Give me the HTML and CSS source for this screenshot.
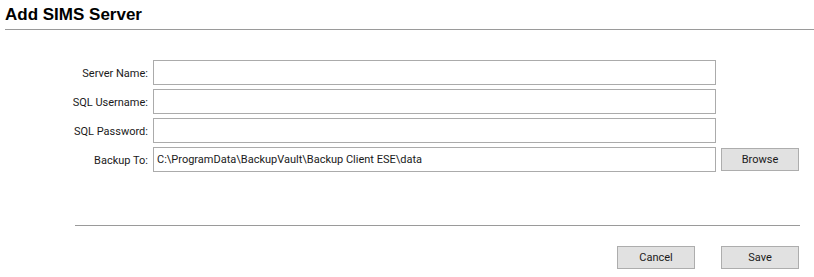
FILE: index.html
```html
<!DOCTYPE html>
<html lang="en">
<head>
    <meta charset="UTF-8">
    <title>Add SIMS Server</title>
    <link rel="stylesheet" href="styles.css">
</head>
<body>
    <div class="dialog-header">
        <h1>Add SIMS Server</h1>
    </div>
    <form id="server-form" class="server-form">
        <label for="server-name">Server Name:</label>
        <input type="text" id="server-name" name="server-name">
        <span></span>

        <label for="sql-username">SQL Username:</label>
        <input type="text" id="sql-username" name="sql-username">
        <span></span>

        <label for="sql-password">SQL Password:</label>
        <input type="password" id="sql-password" name="sql-password">
        <span></span>

        <label for="backup-to">Backup To:</label>
        <input type="text" id="backup-to" name="backup-to" value="C:\ProgramData\BackupVault\Backup Client ESE\data">
        <button type="button" class="btn browse">Browse</button>
    </form>
    <div class="dialog-footer">
        <button type="button" class="btn">Cancel</button>
        <button type="submit" form="server-form" class="btn">Save</button>
    </div>
</body>
</html>
```

FILE: styles.css
```css
body {
    margin: 0;
    background: #fff;
    font-family: Roboto, "Liberation Sans", sans-serif;
    font-size: 11px;
    color: #1a1a1a;
}
.dialog-header {
    margin-left: 5px;
    padding: 5px 0 4px 0;
    border-bottom: 1px solid #9a9a9a;
}
.dialog-header h1 {
    margin: 0;
    font-family: "Liberation Sans", Arial, sans-serif;
    font-size: 17px;
    line-height: 20px;
    font-weight: bold;
    color: #000;
}
.server-form {
    display: grid;
    grid-template-columns: 88px 563px 78px;
    column-gap: 5px;
    row-gap: 4px;
    margin: 30px 0 0 60px;
    align-items: center;
}
.server-form label {
    padding-top: 2px;
    text-align: right;
}
.server-form input {
    box-sizing: border-box;
    height: 25px;
    margin: 0;
    padding: 0 3px;
    border: 1px solid #ababab;
    background: #fff;
    font-family: Roboto, "Liberation Sans", sans-serif;
    font-size: 11px;
    color: #1a1a1a;
    outline: none;
}
.btn {
    box-sizing: border-box;
    width: 78px;
    height: 23px;
    margin: 0;
    padding: 0;
    border: 1px solid #adadad;
    background: #e1e1e1;
    font-family: Roboto, "Liberation Sans", sans-serif;
    font-size: 11px;
    color: #1a1a1a;
}
.dialog-footer {
    display: flex;
    justify-content: flex-end;
    gap: 26px;
    width: 724px;
    margin: 53px 0 0 75px;
    padding: 20px 1px 0 0;
    border-top: 1px solid #9a9a9a;
}
```
